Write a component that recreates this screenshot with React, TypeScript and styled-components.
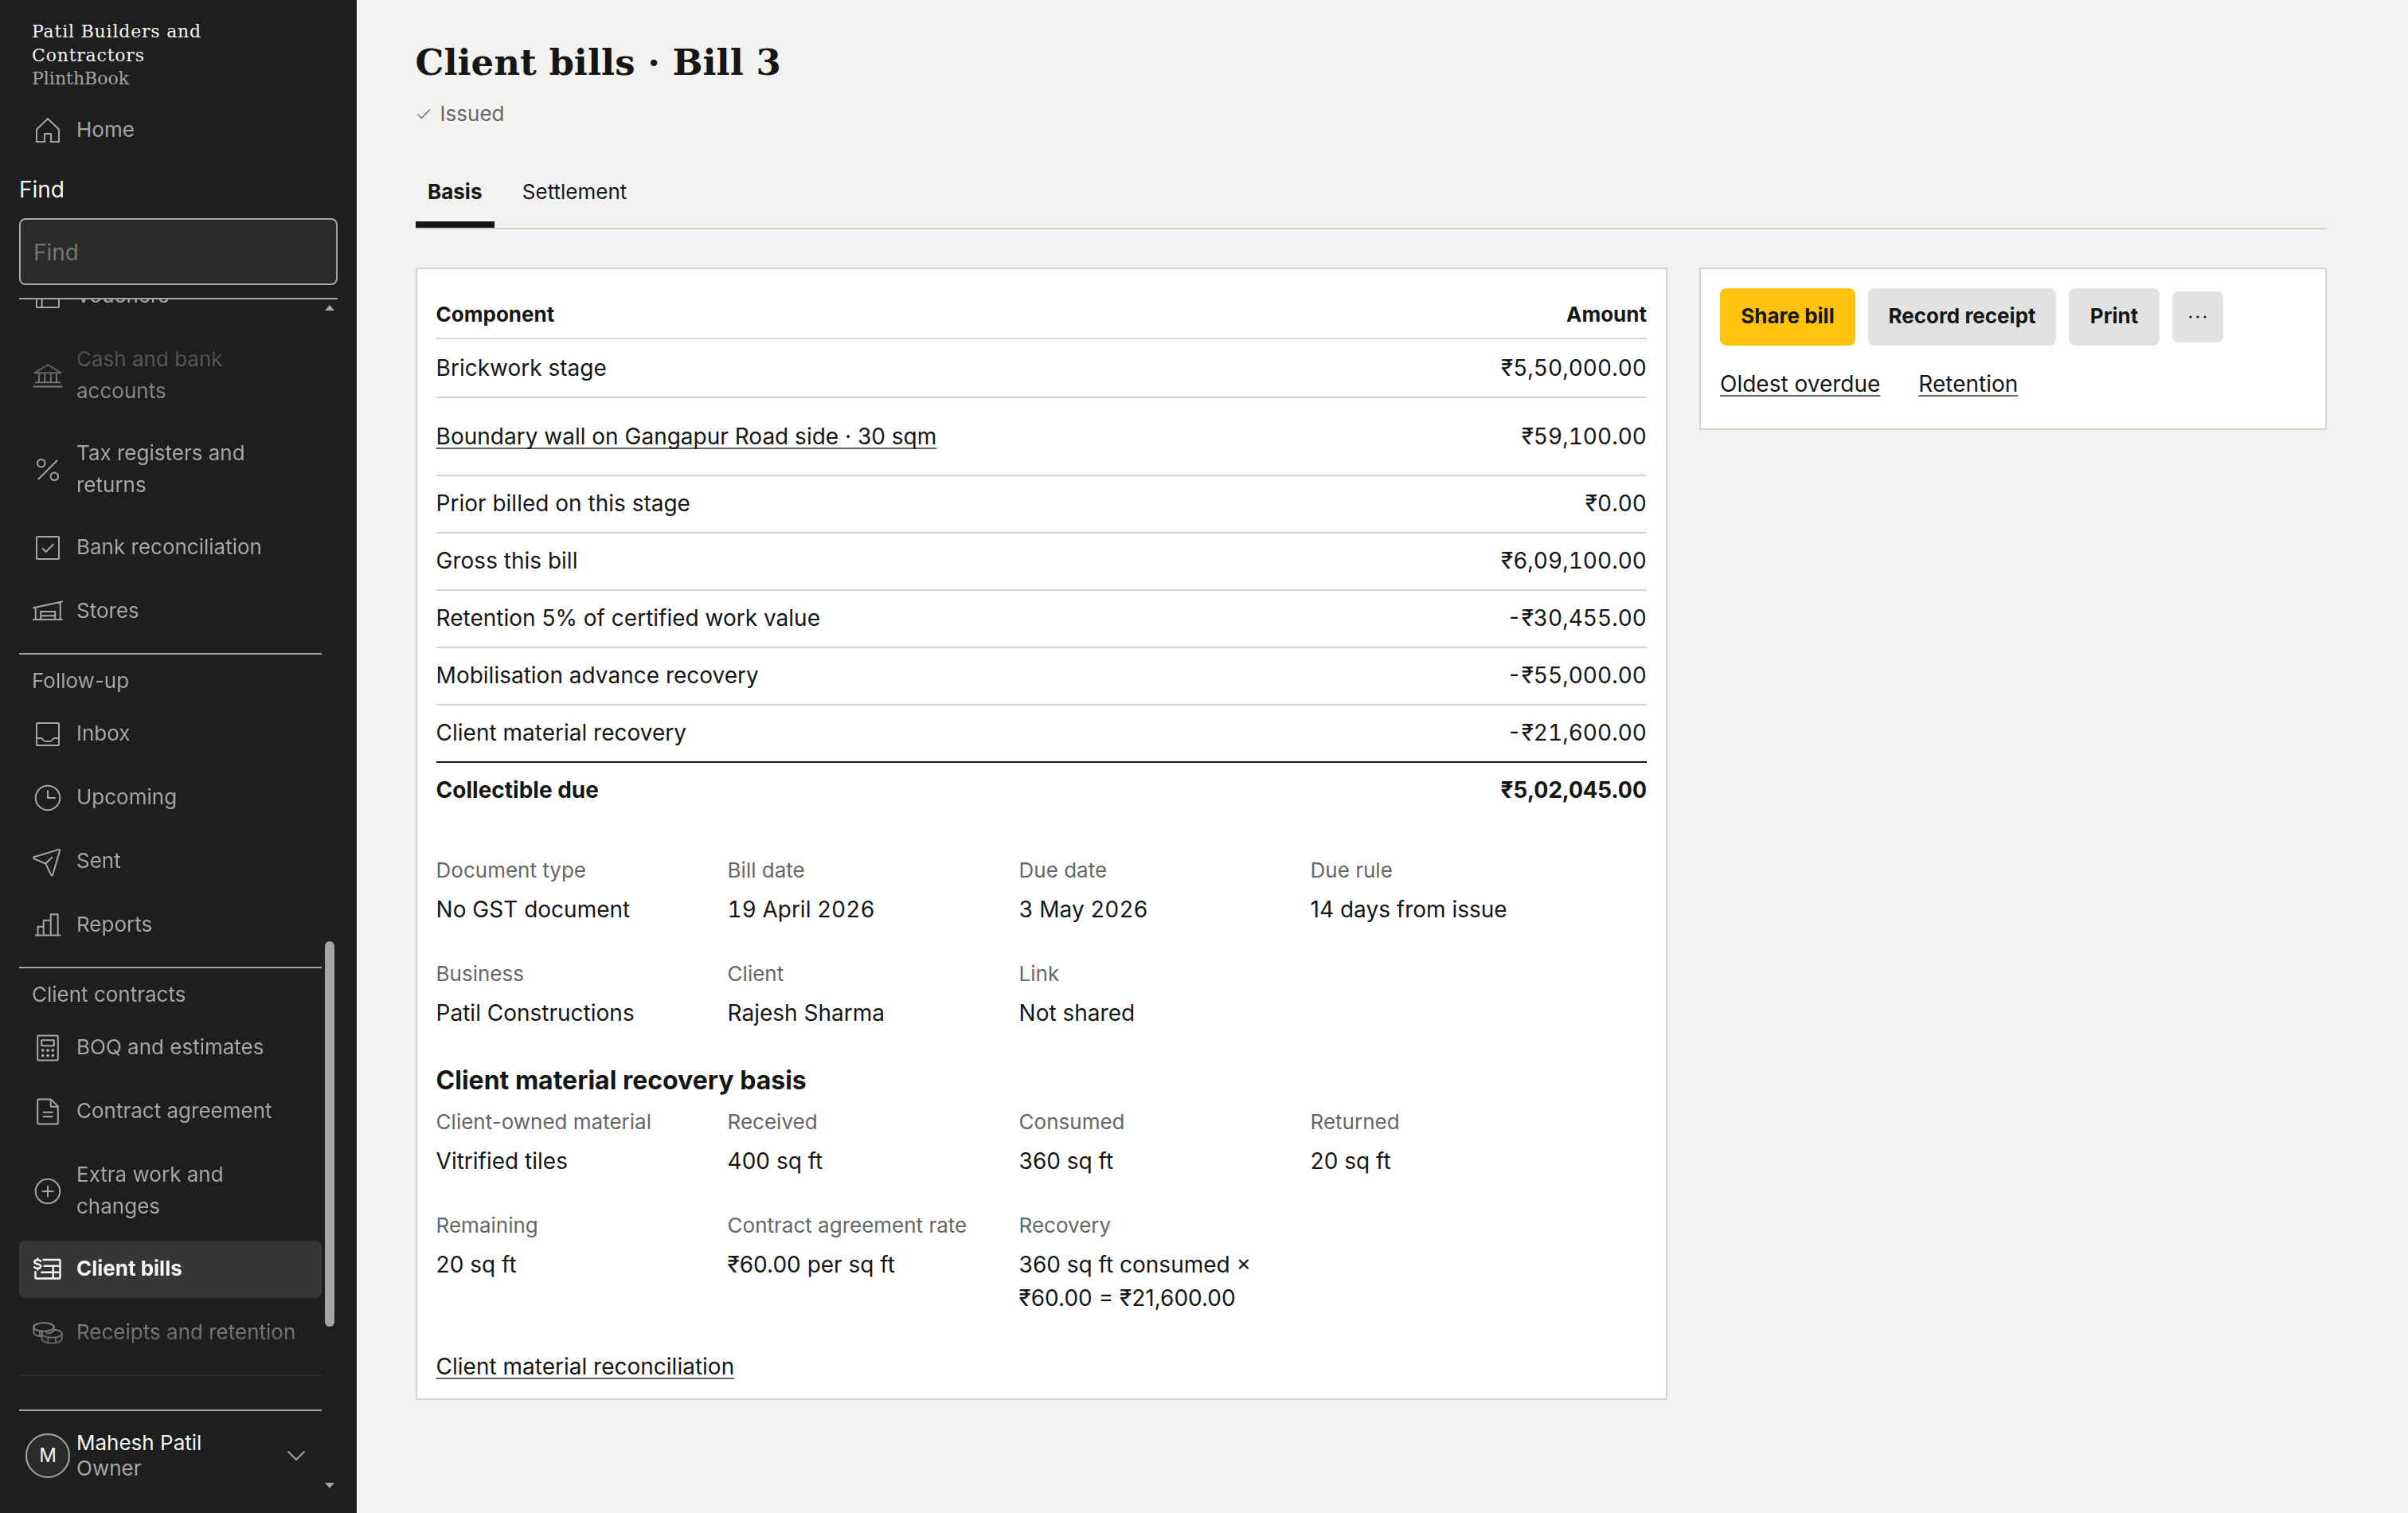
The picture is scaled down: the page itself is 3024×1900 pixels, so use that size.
import type { ReactNode } from 'react'
import styled, { createGlobalStyle, css } from 'styled-components'

const GlobalStyle = createGlobalStyle`
  *, *::before, *::after { box-sizing: border-box; }
  body {
    margin: 0;
    background: #f2f2f0;
    color: #161616;
    font-family: Inter, "Liberation Sans", sans-serif;
    font-size: 28px;
    line-height: 42px;
  }
`

const slab = css`
  font-family: "DejaVu Serif", serif;
`

const Shell = styled.div`
  display: flex;
  width: 3024px;
  height: 1900px;
  overflow: hidden;
`

/* ---------- sidebar ---------- */

const Sidebar = styled.aside`
  display: flex;
  flex-direction: column;
  flex: none;
  width: 448px;
  height: 100%;
  padding: 25px 24px 0;
  background: #1e1e1e;
  color: #a6a6a6;
`

const Brand = styled.div`
  ${slab}
  height: 103px;
  padding-left: 16px;
  font-size: 22px;
  letter-spacing: 0.8px;
  line-height: 30px;
  color: #f5f5f3;
`

const Product = styled.div`
  letter-spacing: 0;
  line-height: 28px;
  color: #a6a6a6;
`

const FindLabel = styled.label`
  display: block;
  margin-top: 17px;
  color: #f5f5f3;
`

const FindInput = styled.input`
  flex: none;
  width: 400px;
  height: 84px;
  margin: 15px 0 16px;
  padding: 2px 16px 0;
  border: 2px solid #a6a6a6;
  border-radius: 8px;
  background: #2a2a2a;
  font: inherit;
  color: #f5f5f3;
  &::placeholder { color: #757575; opacity: 1; }
`

const ScrollArea = styled.div`
  position: relative;
  display: flex;
  flex-direction: column;
  flex: none;
  width: 400px;
  height: 1526px;
  border-top: 2px solid #a6a6a6;
`

const Nav = styled.nav`
  flex: none;
  width: 380px;
  height: 1394px;
  overflow: hidden;
  mask-image: linear-gradient(to bottom, #000 1260px, transparent 1360px);
`

const NavGroup = styled.div<{ $pull?: boolean }>`
  display: flex;
  flex-direction: column;
  gap: 8px;
  padding-bottom: 16px;
  border-bottom: 2px solid #a6a6a6;
  margin-top: ${p => (p.$pull ? '-40px' : '0')};
`

const NavHeading = styled.div`
  height: 56px;
  padding: 13px 16px 0;
  font-size: 26px;
  line-height: 40px;
`

const NavItem = styled.a<{ $active?: boolean; $tall?: boolean; $fade?: boolean }>`
  display: flex;
  flex: none;
  align-items: center;
  gap: 16px;
  width: 380px;
  min-height: 72px;
  padding: ${p => (p.$tall ? '15px 16px 13px' : '14px 16px')};
  border-radius: 8px;
  font-size: 26px;
  line-height: 40px;
  font-weight: ${p => (p.$active ? 700 : 400)};
  color: ${p => (p.$active ? '#f5f5f3' : '#a6a6a6')};
  background: ${p => (p.$active ? '#363636' : 'transparent')};
  ${p => p.$fade && 'mask-image: linear-gradient(to bottom, transparent -10px, #000 104px);'}
  svg {
    flex: none;
    stroke-width: ${p => (p.$active ? 2.4 : 2)};
  }
`

const NavText = styled.span`
  padding-bottom: 2px;
`

const Scrollbar = styled.div`
  position: absolute;
  top: 7px;
  right: 4px;
  bottom: 31px;
  width: 12px;
  display: flex;
  flex-direction: column;
`

const ScrollArrow = styled.i<{ $down?: boolean }>`
  height: 7px;
  background: #a6a6a6;
  clip-path: ${p => (p.$down ? 'polygon(0 0, 100% 0, 50% 100%)' : 'polygon(50% 0, 100% 100%, 0 100%)')};
`

const ScrollThumb = styled.i`
  height: 484px;
  margin: 792px 0 auto;
  border-radius: 6px;
  background: #a6a6a6;
`

const Account = styled.div`
  display: flex;
  flex: none;
  align-items: center;
  width: 380px;
  height: 114px;
  padding: 0 20px 0 8px;
  border-top: 2px solid #a6a6a6;
  svg { margin-left: auto; }
`

const Avatar = styled.div`
  display: grid;
  place-items: center;
  width: 56px;
  height: 56px;
  margin-right: 8px;
  border: 2px solid #a6a6a6;
  border-radius: 50%;
  background: #2a2a2a;
  font-size: 24px;
  color: #f5f5f3;
`

const AccountName = styled.div`
  font-size: 26px;
  line-height: 32px;
  strong { display: block; font-weight: 400; color: #f5f5f3; }
`

/* ---------- page ---------- */

const Main = styled.main`
  flex: 1;
  padding: 49px 102px 0 73.6px;
`

const Title = styled.h1`
  ${slab}
  margin: 0;
  font-size: 45px;
  line-height: 60px;
  font-weight: 700;
`

const Status = styled.div`
  display: flex;
  align-items: center;
  gap: 9px;
  margin-top: 14px;
  font-size: 26px;
  line-height: 39px;
  color: #666;
`

const Tabs = styled.div`
  display: flex;
  gap: 19px;
  height: 88px;
  margin-top: 38px;
  border-bottom: 2px solid #d3d4ce;
`

const Tab = styled.button<{ $active?: boolean }>`
  height: 86px;
  padding: 21px 16px 18px 15.4px;
  border: 0;
  border-bottom: 8px solid ${p => (p.$active ? '#161616' : 'transparent')};
  background: none;
  font: inherit;
  font-size: 26px;
  line-height: 39px;
  font-weight: ${p => (p.$active ? 700 : 400)};
  color: #161616;
`

const Columns = styled.div`
  display: grid;
  grid-template-columns: 1572.4px 788px;
  gap: 40px;
  align-items: start;
  margin-top: 48px;
`

const Card = styled.section<{ $height: number }>`
  height: ${p => p.$height}px;
  padding: 24px;
  border: 2px solid #d3d4ce;
  background: #fff;
`

const Row = styled.div<{ $height?: number; $last?: boolean }>`
  display: flex;
  justify-content: space-between;
  align-items: center;
  height: ${p => p.$height ?? 72}px;
  padding-bottom: ${p => (p.$height ? 0 : 2)}px;
  border-bottom: 2px solid ${p => (p.$last ? '#161616' : '#d3d4ce')};
`

const HeadRow = styled(Row)`
  padding-top: 3px;
  font-size: 26px;
  font-weight: 700;
`

const TotalRow = styled(Row)`
  border-bottom: 0;
  font-weight: 700;
`

const Amount = styled.span`
  font-variant-numeric: tabular-nums;
`

const TextLink = styled.a`
  color: #161616;
  text-decoration: underline;
  text-decoration-color: #666;
  text-decoration-thickness: 2px;
  text-underline-offset: 4px;
  text-decoration-skip-ink: none;
`

const Facts = styled.dl`
  display: grid;
  grid-template-columns: repeat(4, 342px);
  gap: 40px 24px;
  margin: 0;
`

const Fact = styled.div`
  dt {
    font-size: 26px;
    line-height: 40px;
    color: #666;
  }
  dd { margin: 8px 0 0; }
`

const FactsBlock = styled.div`
  margin-top: 47px;
`

const SubHeading = styled.h2`
  margin: 42px 0 10px;
  font-size: 32px;
  line-height: 44px;
  font-weight: 700;
`

const CardFooter = styled.div`
  margin-top: 44px;
`

const Actions = styled.div`
  display: flex;
  align-items: center;
  gap: 16px;
`

const Button = styled.button<{ $width: number; $primary?: boolean }>`
  width: ${p => p.$width}px;
  height: 72px;
  padding: 0 0 2px;
  border: 0;
  border-radius: 8px;
  background: ${p => (p.$primary ? '#ffc20e' : '#e2e2e2')};
  font: inherit;
  font-size: 26px;
  font-weight: 700;
  color: #161616;
`

const MoreButton = styled(Button)`
  display: grid;
  place-items: center;
  height: 64px;
  padding: 0;
`

const Links = styled.div`
  display: flex;
  gap: 48px;
  margin-top: 27px;
`

/* ---------- icons, all on a 40px box ---------- */

const Icon = ({ children }: { children: ReactNode }) => (
  <svg width="40" height="40" viewBox="0 0 40 40" fill="none" stroke="currentColor" strokeLinecap="round" strokeLinejoin="round">
    {children}
  </svg>
)

const icons = {
  home: <path strokeLinejoin="miter" d="M6 34V18.5L20 5l14 13.5V34H24V24h-8v10z" />,
  voucher: <><rect x="6" y="6" width="28" height="28" rx="1" /><path d="M12.7 6v28" /></>,
  bank: <path d="M3.6 16.2 20 6l16.4 10.2zM9 16.5V28M16.3 16.5V28M23.8 16.5V28M31 16.5V28M4.8 28.3h30.4M2 33.6h36" />,
  percent: <><circle cx="11.7" cy="11.7" r="4.8" /><circle cx="28.3" cy="28.3" r="4.8" /><path d="M8.5 31.5l23-23" /></>,
  check: <><rect x="6" y="6" width="28" height="28" rx="1" /><path d="M13.3 20.6l4.2 4.4 9.3-9.3" /></>,
  store: <path d="M2 15.3 38.2 7.5M4.7 15v15M35.7 8.5V30M2 30h36M11.2 30V20h18v10M11.2 25.3h18" />,
  inbox: <><rect x="6" y="6" width="28" height="28" rx="1" /><path d="M6 25h5.5c2.5 0 2.3 4 6 4h5c3.7 0 3.5-4 6-4H34" /></>,
  clock: <><circle cx="20" cy="20" r="15.3" /><path d="M20 11v9h9.3" /></>,
  send: <path d="M2.6 14.3 33.8 4.9c.9-.3 1.5.3 1.3 1.2L26.2 36.7c-.3 1-1.5 1.1-2 .2L17.3 22.5 2.7 16.3c-1-.5-1-1.7-.1-2zM17.3 22.5l8-7.8" />,
  chart: <path d="M5 32.6h30.5M7.5 32.5V21.7h7.2M14.7 32.5V13.8h9M23.7 32.5V6.2h9v26.3" />,
  calculator: (
    <>
      <rect x="7.2" y="4.5" width="25.6" height="31" rx="1" />
      <rect x="12.2" y="10.3" width="15.6" height="7" />
      <g fill="currentColor" stroke="none">
        {[23, 29.6].map(y => [13.7, 20, 26.3].map(x => <circle key={`${x}-${y}`} cx={x} cy={y} r="1.9" />))}
      </g>
    </>
  ),
  document: <path d="M8 4.6h16.2l8.6 8.8v21.2c0 .5-.3.8-.8.8H8c-.5 0-.8-.3-.8-.8V5.4c0-.5.3-.8.8-.8zM23.8 5v8.7h8.7M14.6 20.8h11M14.6 26.2h11" />,
  plus: <><circle cx="20" cy="20" r="15.3" /><path d="M20 13.5v13M13.5 20h13" /></>,
  bill: (
    <>
      <path d="M14.5 8h20c.6 0 1 .4 1 1v21.500c0 .6-.4 1-1 1h-29c-.6 0-1-.4-1-1v-7.300M15.500 15.700h20M12.200 23.700h23.300M26.700 15.700v15.500" />
      <path d="M11.200 9.800C10.300 8.600 9 8.200 7.300 8.200c-2.300 0-4 .9-4 2.600 0 3.800 8 1.500 8 5.300 0 1.800-1.700 2.700-4 2.700-1.800 0-3.300-.4-4.200-1.600M7.300 6.500v1.700M7.300 18.800v1.700" />
    </>
  ),
  coins: (
    <>
      <ellipse cx="15" cy="12.5" rx="12.700" ry="5.300" />
      <path d="M2.300 12.500v6.500c0 2.700 3.700 4.800 9.500 5.300M27.700 12.500v3M10 17.500v6.300M18.500 17.700v2.500" />
      <path d="M27.500 15.700c6 .3 10.200 2.400 10.200 5 0 3-5.500 5-12.500 5s-12.700-2-12.700-5c0-.8.400-1.500 1-2M27.700 15.500c0 2.500-2.700 4.300-7 5" />
      <path d="M12.500 21v6.500c0 3 5.700 5.300 12.700 5.300s12.500-2.300 12.500-5.300V21M20.500 25.700v6.500M30 25.500v6.500" />
    </>
  ),
}

type NavEntry = { icon: keyof typeof icons; text: string; active?: boolean; tall?: boolean; fade?: boolean }

const books: NavEntry[] = [
  { icon: 'voucher', text: 'Vouchers' },
  { icon: 'bank', text: 'Cash and bank accounts', tall: true, fade: true },
  { icon: 'percent', text: 'Tax registers and returns', tall: true },
  { icon: 'check', text: 'Bank reconciliation' },
  { icon: 'store', text: 'Stores' },
]

const followUp: NavEntry[] = [
  { icon: 'inbox', text: 'Inbox' },
  { icon: 'clock', text: 'Upcoming' },
  { icon: 'send', text: 'Sent' },
  { icon: 'chart', text: 'Reports' },
]

const contracts: NavEntry[] = [
  { icon: 'calculator', text: 'BOQ and estimates' },
  { icon: 'document', text: 'Contract agreement' },
  { icon: 'plus', text: 'Extra work and changes', tall: true },
  { icon: 'bill', text: 'Client bills', active: true },
  { icon: 'coins', text: 'Receipts and retention' },
]

const components = [
  { name: 'Brickwork stage', amount: '₹5,50,000.00', height: 74 },
  { name: 'Boundary wall on Gangapur Road side · 30 sqm', amount: '₹59,100.00', height: 98, link: true },
  { name: 'Prior billed on this stage', amount: '₹0.00' },
  { name: 'Gross this bill', amount: '₹6,09,100.00' },
  { name: 'Retention 5% of certified work value', amount: '-₹30,455.00' },
  { name: 'Mobilisation advance recovery', amount: '-₹55,000.00' },
  { name: 'Client material recovery', amount: '-₹21,600.00' },
]

type FactEntry = { label: string; value: string; date?: boolean }

const billFacts: FactEntry[] = [
  { label: 'Document type', value: 'No GST document' },
  { label: 'Bill date', value: '19 April 2026', date: true },
  { label: 'Due date', value: '3 May 2026', date: true },
  { label: 'Due rule', value: '14 days from issue' },
  { label: 'Business', value: 'Patil Constructions' },
  { label: 'Client', value: 'Rajesh Sharma' },
  { label: 'Link', value: 'Not shared' },
]

const materialFacts: FactEntry[] = [
  { label: 'Client-owned material', value: 'Vitrified tiles' },
  { label: 'Received', value: '400 sq ft' },
  { label: 'Consumed', value: '360 sq ft' },
  { label: 'Returned', value: '20 sq ft' },
  { label: 'Remaining', value: '20 sq ft' },
  { label: 'Contract agreement rate', value: '₹60.00 per sq ft' },
  { label: 'Recovery', value: '360 sq ft consumed × ₹60.00 = ₹21,600.00' },
]

const NavList = ({ items }: { items: NavEntry[] }) => (
  <>
    {items.map(item => (
      <NavItem key={item.text} $active={item.active} $tall={item.tall} $fade={item.fade}>
        <Icon>{icons[item.icon]}</Icon>
        <NavText>{item.text}</NavText>
      </NavItem>
    ))}
  </>
)

const FactList = ({ facts }: { facts: FactEntry[] }) => (
  <Facts>
    {facts.map(fact => (
      <Fact key={fact.label}>
        <dt>{fact.label}</dt>
        <dd>{fact.date ? <Amount>{fact.value}</Amount> : fact.value}</dd>
      </Fact>
    ))}
  </Facts>
)

function App() {
  return <>
    <GlobalStyle />
    <Shell>
      <Sidebar>
        <Brand>
          Patil Builders and
          <br />
          Contractors
          <Product>PlinthBook</Product>
        </Brand>
        <NavItem>
          <Icon>{icons.home}</Icon>
          <NavText>Home</NavText>
        </NavItem>
        <FindLabel htmlFor="find">Find</FindLabel>
        <FindInput id="find" placeholder="Find" />
        <ScrollArea>
          <Nav>
            <NavGroup $pull>
              <NavList items={books} />
            </NavGroup>
            <NavGroup>
              <NavHeading>Follow-up</NavHeading>
              <NavList items={followUp} />
            </NavGroup>
            <NavGroup>
              <NavHeading>Client contracts</NavHeading>
              <NavList items={contracts} />
            </NavGroup>
          </Nav>
          <Account>
            <Avatar>M</Avatar>
            <AccountName>
              <strong>Mahesh Patil</strong>
              Owner
            </AccountName>
            <svg width="24" height="14" viewBox="0 0 24 14" fill="none" stroke="currentColor" strokeWidth="2">
              <path d="M1.5 1.5 12 12 22.5 1.5" />
            </svg>
          </Account>
          <Scrollbar>
            <ScrollArrow />
            <ScrollThumb />
            <ScrollArrow $down />
          </Scrollbar>
        </ScrollArea>
      </Sidebar>

      <Main>
        <Title>Client bills · Bill 3</Title>
        <Status>
          <svg width="22" height="20" viewBox="0 0 22 20" fill="none" stroke="currentColor" strokeWidth="1.3">
            <path d="M2.5 10.5 7.3 15.3 17.7 4.8" />
          </svg>
          Issued
        </Status>
        <Tabs>
          <Tab $active>Basis</Tab>
          <Tab>Settlement</Tab>
        </Tabs>
        <Columns>
          <Card $height={1422}>
            <HeadRow $height={64}>
              <span>Component</span>
              <span>Amount</span>
            </HeadRow>
            {components.map((row, i) => (
              <Row key={row.name} $height={row.height} $last={i === components.length - 1}>
                {row.link ? <TextLink>{row.name}</TextLink> : <span>{row.name}</span>}
                <Amount>{row.amount}</Amount>
              </Row>
            ))}
            <TotalRow $height={68}>
              <span>Collectible due</span>
              <Amount>₹5,02,045.00</Amount>
            </TotalRow>
            <FactsBlock>
              <FactList facts={billFacts} />
            </FactsBlock>
            <SubHeading>Client material recovery basis</SubHeading>
            <FactList facts={materialFacts} />
            <CardFooter>
              <TextLink>Client material reconciliation</TextLink>
            </CardFooter>
          </Card>

          <Card $height={204}>
            <Actions>
              <Button $width={170} $primary>Share bill</Button>
              <Button $width={236}>Record receipt</Button>
              <Button $width={114}>Print</Button>
              <MoreButton $width={64} aria-label="More">
                <svg width="22" height="4" viewBox="0 0 22 4" fill="currentColor">
                  <circle cx="2" cy="2" r="1.5" />
                  <circle cx="11" cy="2" r="1.5" />
                  <circle cx="20" cy="2" r="1.5" />
                </svg>
              </MoreButton>
            </Actions>
            <Links>
              <TextLink>Oldest overdue</TextLink>
              <TextLink>Retention</TextLink>
            </Links>
          </Card>
        </Columns>
      </Main>
    </Shell>
  </>
}

export default App
